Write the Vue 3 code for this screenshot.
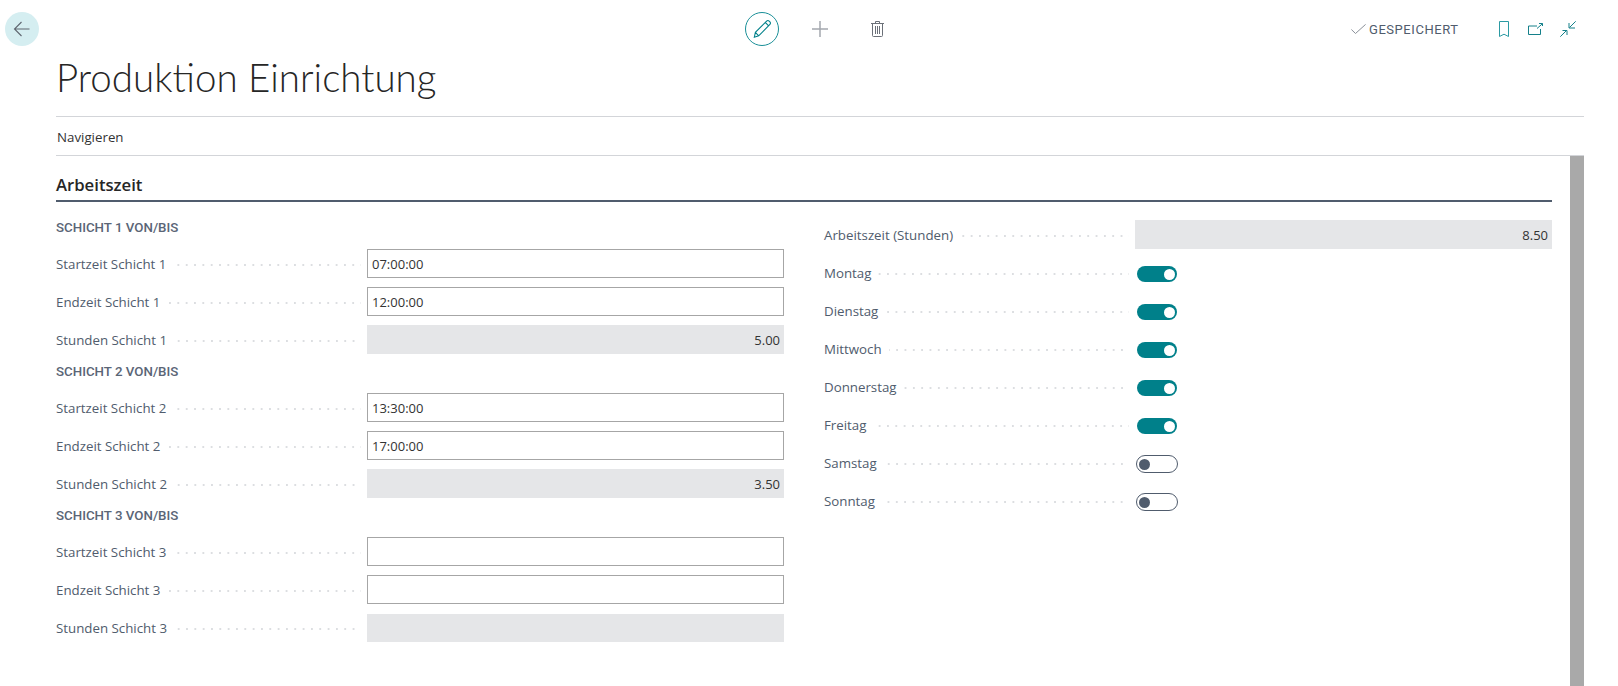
<script setup>
const groups = [
  { title: 'SCHICHT 1 VON/BIS', n: 1, start: '07:00:00', end: '12:00:00', hours: '5.00' },
  { title: 'SCHICHT 2 VON/BIS', n: 2, start: '13:30:00', end: '17:00:00', hours: '3.50' },
  { title: 'SCHICHT 3 VON/BIS', n: 3, start: '', end: '', hours: '' },
]
const days = [
  { name: 'Montag', on: true },
  { name: 'Dienstag', on: true },
  { name: 'Mittwoch', on: true },
  { name: 'Donnerstag', on: true },
  { name: 'Freitag', on: true },
  { name: 'Samstag', on: false },
  { name: 'Sonntag', on: false },
]
</script>

<template>
  <div class="page">
    <header class="topbar">
      <button class="back" aria-label="Zurück">
        <svg width="18" height="18" viewBox="0 0 18 18" fill="none" stroke="#5f6670" stroke-width="1.1">
          <path d="M16.500 9H1.500M8.500 2 1.500 9l7 7" />
        </svg>
      </button>
      <div class="actions">
        <span class="edit">
          <svg width="22" height="22" viewBox="0 0 20 20" fill="none" stroke="#00808a" stroke-width="1">
            <path d="M3 17.500l1-4.500L14.200 2.800a1.600 1.600 0 0 1 2.300 0l.7.7a1.600 1.600 0 0 1 0 2.300L7 16.200 3 17.500zM4 13l3 3.200M13 4l3 3.200" />
          </svg>
        </span>
        <svg class="plus" width="16" height="16" viewBox="0 0 16 16" stroke="#a4a8af" stroke-width="1.500">
          <path d="M8 0v16M0 8h16" />
        </svg>
        <svg class="trash" width="13" height="16" viewBox="0 0 13 16" fill="none" stroke="#6b7078" stroke-width="1">
          <path d="M0 2.500h13M1.500 2.500v12a1 1 0 0 0 1 1h8a1 1 0 0 0 1-1v-12M4.500 2.500V.5h4v2M4.500 5v8M6.500 5v8M8.500 5v8" />
        </svg>
      </div>
      <div class="status">
        <svg width="15" height="10" viewBox="0 0 15 10" fill="none" stroke="#8a9099" stroke-width="1">
          <path d="M.4 5.500 4.500 9.500 14.600.4" />
        </svg>
        <span>GESPEICHERT</span>
      </div>
      <div class="tools">
        <svg class="bookmark" width="10" height="16" viewBox="0 0 10 16" fill="none" stroke="#2b9aa3" stroke-width="1">
          <path d="M.5.5h9v15L5 13.200.5 15.500z" />
        </svg>
        <svg class="open" width="15" height="12" viewBox="0 0 15 12" fill="none" stroke="#14808a" stroke-width="1">
          <path d="M9 3H.5v8.500h12V6M9 5.500 14.500.7M11 .5h3.500V3" />
        </svg>
        <svg class="collapse" width="16" height="16" viewBox="0 0 16 16" fill="none" stroke="#14808a" stroke-width="1">
          <path d="M.300 15.700 6.500 9.500M2.500 9.500H7V14M15.700.3 9.500 6.500M9 2v5h6" />
        </svg>
      </div>
    </header>

    <div class="body">
      <h1 class="title">Produktion Einrichtung</h1>
      <nav class="nav">Navigieren</nav>
      <div class="content">
        <main class="main">
          <h2 class="section">Arbeitszeit</h2>
          <div class="columns">
            <section class="col">
              <template v-for="g in groups" :key="g.n">
                <h3 class="group">{{ g.title }}</h3>
                <div class="row">
                  <label>Startzeit Schicht {{ g.n }}</label><i class="dots"></i>
                  <div class="input">{{ g.start }}</div>
                </div>
                <div class="row">
                  <label>Endzeit Schicht {{ g.n }}</label><i class="dots"></i>
                  <div class="input">{{ g.end }}</div>
                </div>
                <div class="row">
                  <label>Stunden Schicht {{ g.n }}</label><i class="dots"></i>
                  <div class="readonly">{{ g.hours }}</div>
                </div>
              </template>
            </section>
            <section class="col right">
              <div class="row">
                <label>Arbeitszeit (Stunden)</label><i class="dots"></i>
                <div class="readonly">8.50</div>
              </div>
              <div v-for="d in days" :key="d.name" class="row">
                <label>{{ d.name }}</label><i class="dots"></i>
                <div class="value">
                  <span class="toggle" :class="{ on: d.on }"><b></b></span>
                </div>
              </div>
            </section>
          </div>
        </main>
        <div class="scrollbar"></div>
      </div>
    </div>
  </div>
</template>

<style>
html, body { margin: 0; background: #fff; overflow: hidden; }
</style>

<style scoped>
.page {
  width: 1618px;
  height: 686px;
  overflow: hidden;
  font-family: "Open Sans", "Liberation Sans", sans-serif;
  color: #505c6d;
}
.topbar {
  display: flex;
  align-items: center;
  height: 34px;
  padding: 12px 0 0 5px;
}
.back {
  width: 34px;
  height: 34px;
  padding: 0;
  border: 0;
  border-radius: 50%;
  background: #d5eef1;
  display: flex;
  align-items: center;
  justify-content: center;
}
.actions {
  display: flex;
  align-items: center;
  margin-left: 706px;
}
.edit {
  width: 34px;
  height: 34px;
  box-sizing: border-box;
  border: 1px solid #1a8f98;
  border-radius: 50%;
  display: flex;
  align-items: center;
  justify-content: center;
}
.plus { margin-left: 33px; }
.trash { margin-left: 43px; }
.status {
  display: flex;
  align-items: center;
  gap: 3px;
  margin-left: 467px;
  font-family: Roboto, sans-serif;
  font-size: 13px;
  font-weight: 400;
  letter-spacing: 0.55px;
  color: #505c6d;
}
.tools {
  display: flex;
  align-items: center;
  margin-left: 40px;
}
.open { margin-left: 19px; }
.collapse { margin-left: 17px; }
.body {
  margin-left: 56px;
  margin-right: 34px;
}
.title {
  margin: 0;
  height: 71px;
  box-sizing: border-box;
  padding-top: 4px;
  font-family: Lato, "Open Sans", sans-serif;
  font-size: 38.500px;
  line-height: 54px;
  font-weight: 300;
  color: #262626;
  border-bottom: 1px solid #d3d5d9;
}
.nav {
  height: 39px;
  box-sizing: border-box;
  padding: 1px 0 0 1px;
  line-height: 38px;
  font-size: 13.300px;
  color: #333;
  border-bottom: 1px solid #d3d5d9;
}
.content {
  display: flex;
  justify-content: space-between;
}
.main {
  width: 1496px;
}
.scrollbar {
  width: 14px;
  height: 530px;
  background: #a9a9a9;
}
.section {
  margin: 0;
  height: 46px;
  box-sizing: border-box;
  padding-top: 17px;
  font-size: 16.700px;
  line-height: 24px;
  font-weight: 600;
  color: #262626;
  border-bottom: 2px solid #505c6d;
}
.columns {
  display: grid;
  grid-template-columns: 728px 728px;
  column-gap: 40px;
}
.col.right { padding-top: 13.500px; }
.group {
  margin: 0;
  height: 30px;
  line-height: 25px;
  font-family: Roboto, sans-serif;
  font-size: 13.300px;
  font-weight: 500;
  color: #5a6576;
}
.col > .group:first-child { margin-top: 13px; height: 29.500px; }
.row {
  display: flex;
  align-items: center;
  height: 38px;
  font-size: 13.300px;
}
.row label { white-space: nowrap; padding-top: 1px; }
.dots {
  flex: 1;
  height: 2px;
  margin: 2px 6px 0 7px;
  background-image: linear-gradient(90deg, #dcdee1 2px, transparent 2px);
  background-size: 8.330px 2px;
  background-position: right center;
}
.input, .readonly, .value {
  width: 417px;
  height: 29px;
  box-sizing: border-box;
  flex: none;
  line-height: 28px;
  font-size: 13px;
  color: #333;
}
.input {
  border: 1px solid #a6a6a6;
  padding: 0 4px;
}
.readonly {
  background: #e5e6e8;
  line-height: 30px;
  text-align: right;
  padding-right: 4px;
}
.row:last-child .readonly { height: 28px; }
.value { display: flex; align-items: center; padding: 3px 0 0 1px; }
.toggle {
  width: 42px;
  height: 18px;
  box-sizing: border-box;
  border: 1px solid #505c6d;
  border-radius: 9px;
  display: flex;
  align-items: center;
  padding: 0 2px;
  background-clip: padding-box;
}
.toggle b {
  width: 11px;
  height: 11px;
  border-radius: 50%;
  background: #505c6d;
}
.toggle.on {
  background-color: #00808a;
  border-color: transparent;
  justify-content: flex-end;
}
.toggle.on b { background: #fff; }
</style>
